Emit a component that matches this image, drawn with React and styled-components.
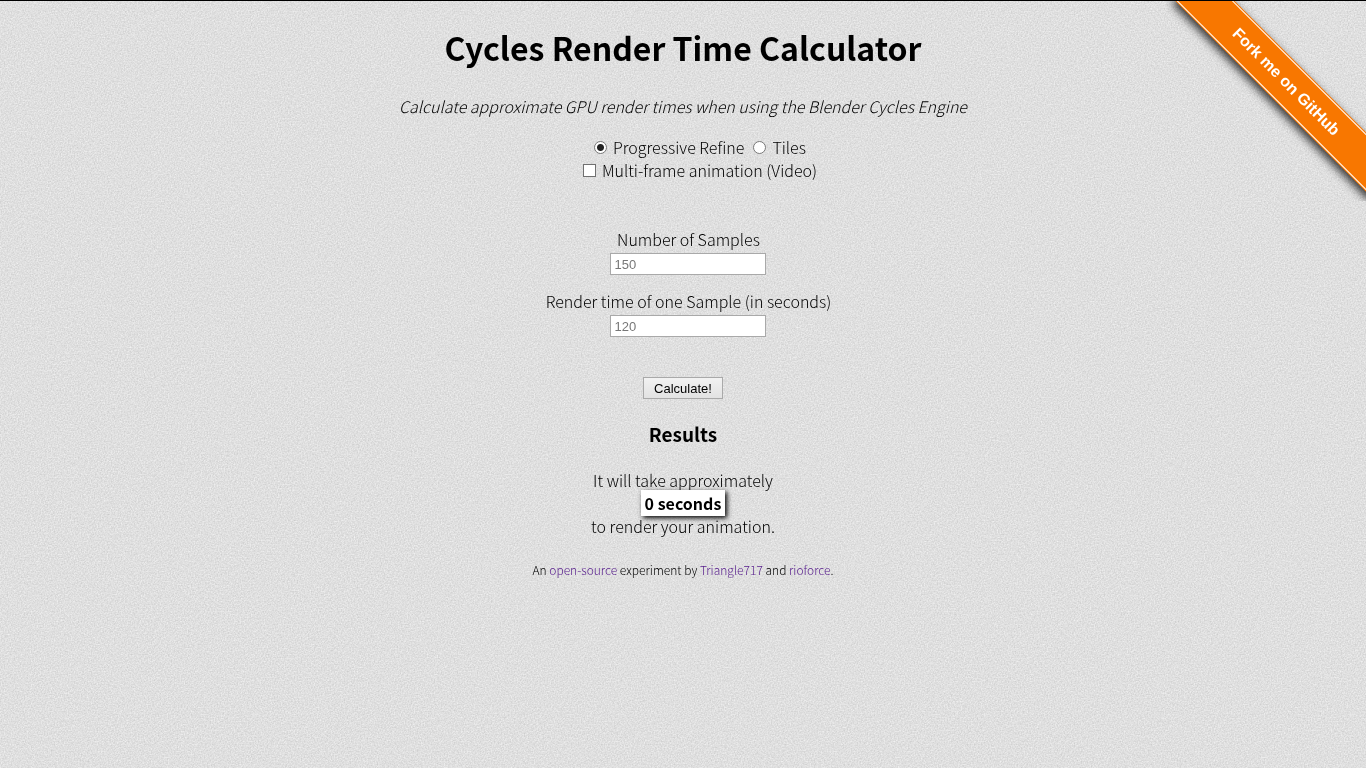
import React, { useState } from "react";
import styled, { createGlobalStyle } from "styled-components";

const GlobalStyle = createGlobalStyle`
  * { box-sizing: border-box; }
  html { background: #dfdfdf; }
  body {
    margin: 0;
    border-top: 1px solid #000;
    color: #000;
    font: 300 16px/23px "Noto Sans CJK SC", "Open Sans", sans-serif;
    overflow-x: hidden;
  }
`;

const Texture = styled.svg`
  position: fixed;
  inset: 0;
  z-index: -1;
  width: 100%;
  height: 100%;
`;

const Page = styled.div`
  position: relative;
  display: flex;
  flex-direction: column;
  align-items: center;
  text-align: center;
  padding: 24px 16px;
`;

const Title = styled.h1`
  margin: 0;
  font-size: 32px;
  line-height: 45px;
  font-weight: 700;
`;

const Tagline = styled.p`
  margin: 25px 0 18px;
  font-style: italic;
`;

const Form = styled.form`
  display: flex;
  flex-direction: column;
  align-items: center;
`;

const Options = styled.div`
  display: flex;
  flex-direction: column;
  align-items: center;
  padding-left: 34px;
  margin-bottom: 46px;
`;

const OptionRow = styled.div`
  display: flex;
  gap: 9px;
`;

const Option = styled.label`
  display: flex;
  align-items: center;
  gap: 6px;
`;

const Radio = styled.input`
  appearance: none;
  width: 13px;
  height: 13px;
  margin: 0;
  border: 1px solid #777;
  border-radius: 50%;
  background: #fff;
  &:checked { background: radial-gradient(circle, #222 0 3px, #fff 4px); }
`;

const Check = styled.input`
  appearance: none;
  width: 13px;
  height: 13px;
  margin: 0;
  border: 1px solid #707070;
  background: #fff;
  &:checked { background: #222; box-shadow: inset 0 0 0 2px #fff; }
`;

const Fields = styled.div`
  display: flex;
  flex-direction: column;
  gap: 15px;
  padding-left: 11px;
  margin-bottom: 40px;
`;

const Field = styled.label`
  display: flex;
  flex-direction: column;
  align-items: center;
  gap: 2px;
`;

const TextBox = styled.input`
  width: 156px;
  height: 22px;
  padding: 1px 3px;
  border: 1px solid #a9a9a9;
  background: #fff;
  font: 13px "Liberation Sans", Arial, sans-serif;
  &::placeholder { color: #777; }
`;

const Button = styled.button`
  height: 22px;
  padding: 0 10px;
  border: 1px solid #a9a9a9;
  background: linear-gradient(#f2f2f2, #e2e2e2);
  color: #000;
  font: 13px "Liberation Sans", Arial, sans-serif;
`;

const ResultsTitle = styled.h3`
  margin: 23px 0;
  font-size: 19px;
  line-height: 24px;
  font-weight: 700;
`;

const Result = styled.p`
  margin: 0;
  display: flex;
  flex-direction: column;
  align-items: center;
`;

const Time = styled.strong`
  margin: -2px 0 -1px;
  padding: 0 4px;
  line-height: 26px;
  font-weight: 700;
  background: #fff;
  box-shadow: 2px 2px 5px #000;
`;

const Footer = styled.footer`
  margin-top: 20px;
  font-size: 12px;
`;

const Link = styled.a`
  color: #551a8b;
  text-decoration: none;
`;

const RibbonCorner = styled.div`
  position: absolute;
  top: 0;
  right: 0;
  width: 200px;
  height: 200px;
  overflow: hidden;
`;

const Ribbon = styled.a`
  position: absolute;
  top: 60px;
  right: -60px;
  width: 280px;
  padding: 5px 40px;
  transform: rotate(45deg);
  background: #f87700;
  box-shadow: 4px 4px 10px rgba(0, 0, 0, 0.8);
  color: #fff;
  font: 700 16px/32px "Liberation Sans", Arial, sans-serif;
  text-align: center;
  text-decoration: none;
  &::before, &::after {
    content: "";
    position: absolute;
    left: 0;
    width: 100%;
    height: 1px;
    background: #fff;
  }
  &::before { top: 1px; }
  &::after { bottom: 1px; }
`;

const units = (n, name) => `${n} ${name}${n === 1 ? "" : "s"}`;

export default function App() {
  const [samples, setSamples] = useState("");
  const [seconds, setSeconds] = useState("");
  const [total, setTotal] = useState(0);

  const calculate = (event) => {
    event.preventDefault();
    setTotal((Number(samples) || 0) * (Number(seconds) || 0));
  };

  return (
    <>
      <GlobalStyle />
      <Texture aria-hidden="true">
        <filter id="grain" x="0" y="0" width="100%" height="100%" colorInterpolationFilters="sRGB">
          <feTurbulence type="fractalNoise" baseFrequency="0.7" numOctaves="3" />
          <feColorMatrix values="0.18 0 0 0 0.785  0.18 0 0 0 0.785  0.18 0 0 0 0.785  0 0 0 0 1" />
        </filter>
        <rect width="100%" height="100%" filter="url(#grain)" />
      </Texture>
      <Page>
        <Title>Cycles Render Time Calculator</Title>
        <Tagline>Calculate approximate GPU render times when using the Blender Cycles Engine</Tagline>
        <Form onSubmit={calculate}>
          <Options>
            <OptionRow>
              <Option><Radio type="radio" name="mode" defaultChecked />Progressive Refine</Option>
              <Option><Radio type="radio" name="mode" />Tiles</Option>
            </OptionRow>
            <Option><Check type="checkbox" />Multi-frame animation (Video)</Option>
          </Options>
          <Fields>
            <Field>
              Number of Samples
              <TextBox placeholder="150" value={samples} onChange={(e) => setSamples(e.target.value)} />
            </Field>
            <Field>
              Render time of one Sample (in seconds)
              <TextBox placeholder="120" value={seconds} onChange={(e) => setSeconds(e.target.value)} />
            </Field>
          </Fields>
          <Button type="submit">Calculate!</Button>
        </Form>
        <ResultsTitle>Results</ResultsTitle>
        <Result>
          <span>It will take approximately</span>
          <Time>{units(total, "second")}</Time>
          <span>to render your animation.</span>
        </Result>
        <Footer>
          An <Link href="#source">open-source</Link> experiment by <Link href="#triangle717">Triangle717</Link> and <Link href="#rioforce">rioforce</Link>.
        </Footer>
        <RibbonCorner>
          <Ribbon href="#fork">Fork me on GitHub</Ribbon>
        </RibbonCorner>
      </Page>
    </>
  );
}
